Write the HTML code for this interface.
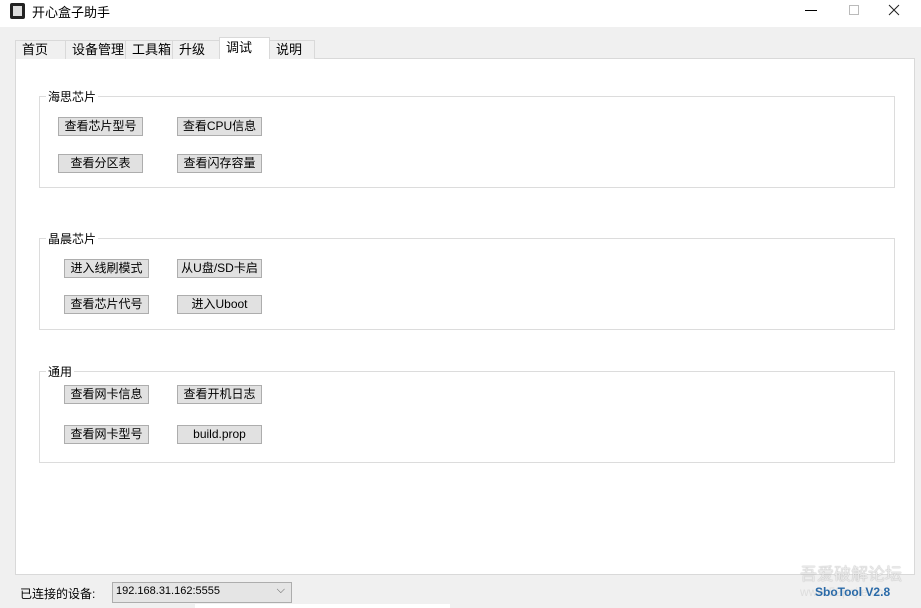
<!DOCTYPE html>
<html><head><meta charset="utf-8"><style>
*{box-sizing:border-box;margin:0;padding:0}
body{width:921px;height:608px;background:#f0f0f0;position:relative;overflow:hidden;font-family:"Liberation Sans","Noto Sans CJK SC","WenQuanYi Zen Hei",sans-serif;font-size:12px;color:#000}
.abs{position:absolute}
.title{left:0;top:0;width:921px;height:27px;background:#fff}
.tab{position:absolute;top:40px;height:19px;border:1px solid #d9d9d9;border-bottom:none;background:#f0f0f0;padding:0 0 0 6px;font-size:13px;line-height:17px}
.panel{left:15px;top:58px;width:900px;height:517px;background:#fff;border:1px solid #d9d9d9}
.grp{position:absolute;left:39px;width:856px;height:92px;border:1px solid #dcdcdc}
.gl{position:absolute;left:46px;background:#fff;padding:0 2px;font-size:12px}
.btn{position:absolute;width:85px;height:19px;background:#e1e1e1;border:1px solid #adadad;text-align:center;font-size:12px;line-height:17px}
</style></head><body>
<div class="abs title"></div>
<div class="abs" style="left:10px;top:3px;width:15px;height:16px;background:#222;border-radius:2px"><div style="position:absolute;left:3px;top:3px;width:9px;height:10px;background:#ddd"></div></div>
<div class="abs" style="left:32px;top:2px;font-size:13px">开心盒子助手</div>
<div class="abs" style="left:805px;top:10px;width:12px;height:1px;background:#000"></div>
<div class="abs" style="left:849px;top:5px;width:10px;height:10px;border:1px solid #bbb"></div>
<svg class="abs" style="left:888px;top:4px" width="12" height="12"><path d="M1 1L11 11M11 1L1 11" stroke="#222" stroke-width="1"/></svg>
<div class="abs panel"></div>
<div class="tab" style="left:15px;width:51px">首页</div>
<div class="tab" style="left:65px;width:61px">设备管理</div>
<div class="tab" style="left:125px;width:48px">工具箱</div>
<div class="tab" style="left:172px;width:48px">升级</div>
<div class="tab" style="left:219px;top:37px;height:22px;width:51px;background:#fff;border-color:#d9d9d9;padding-top:1px">调试</div>
<div class="tab" style="left:269px;width:46px">说明</div>

<div class="grp" style="top:96px;height:92px"></div><div class="gl" style="top:88px">海思芯片</div>
<div class="btn" style="left:58px;top:117px">查看芯片型号</div>
<div class="btn" style="left:177px;top:117px">查看CPU信息</div>
<div class="btn" style="left:58px;top:154px">查看分区表</div>
<div class="btn" style="left:177px;top:154px">查看闪存容量</div>

<div class="grp" style="top:238px"></div><div class="gl" style="top:230px">晶晨芯片</div>
<div class="btn" style="left:64px;top:259px">进入线刷模式</div>
<div class="btn" style="left:177px;top:259px">从U盘/SD卡启</div>
<div class="btn" style="left:64px;top:295px">查看芯片代号</div>
<div class="btn" style="left:177px;top:295px">进入Uboot</div>

<div class="grp" style="top:371px"></div><div class="gl" style="top:363px">通用</div>
<div class="btn" style="left:64px;top:385px">查看网卡信息</div>
<div class="btn" style="left:177px;top:385px">查看开机日志</div>
<div class="btn" style="left:64px;top:425px">查看网卡型号</div>
<div class="btn" style="left:177px;top:425px">build.prop</div>

<div class="abs" style="left:20px;top:585px;font-size:12px">已连接的设备:</div>
<div class="abs" style="left:112px;top:582px;width:180px;height:21px;background:#e5e5e5;border:1px solid #adadad;font-size:11px;padding:2px 0 0 3px">192.168.31.162:5555<span style="position:absolute;right:6px;top:1px;color:#555">⌵</span></div>
<div class="abs" style="left:195px;top:604px;width:255px;height:4px;background:#fff"></div>
<div class="abs" style="left:800px;top:560px;font-size:17px;color:#e8e8e8;text-shadow:0 0 1px #999">吾爱破解论坛</div>
<div class="abs" style="left:800px;top:585px;font-size:12px;color:#ddd">www.52pojie.cn</div>
<div class="abs" style="left:815px;top:585px;font-size:12px;color:#2a6aa8;font-weight:bold">SboTool V2.8</div>
</body></html>
